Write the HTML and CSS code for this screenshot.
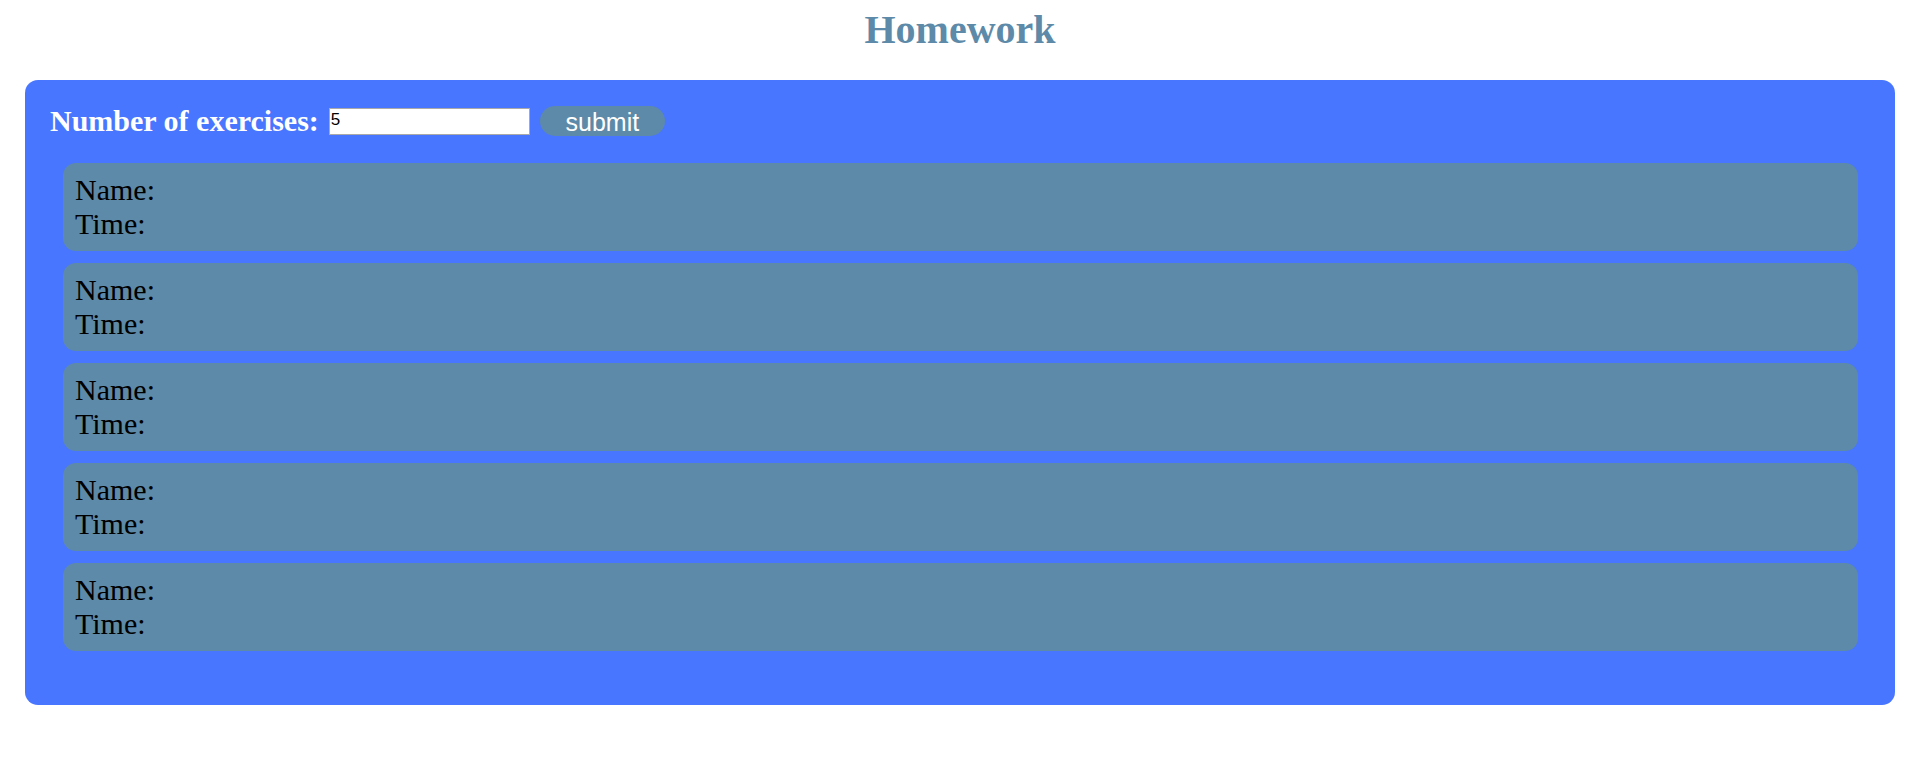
FILE: index.html
```html
<!DOCTYPE html>
<html lang="en">
<head>
<meta charset="utf-8">
<title>Homework</title>
<link rel="stylesheet" href="styles.css">
</head>
<body>
<h1 class="title">Homework</h1>
<main class="panel">
<form class="controls">
<label class="label" for="count">Number of exercises:</label>
<input class="count" id="count" type="text" value="5">
<button class="submit" type="button">submit</button>
</form>
<section class="list">
<div class="exercise"><div>Name:</div><div>Time:</div></div>
<div class="exercise"><div>Name:</div><div>Time:</div></div>
<div class="exercise"><div>Name:</div><div>Time:</div></div>
<div class="exercise"><div>Name:</div><div>Time:</div></div>
<div class="exercise"><div>Name:</div><div>Time:</div></div>
</section>
</main>
</body>
</html>
```
FILE: styles.css
```css
* {
  box-sizing: border-box;
}
body {
  margin: 0;
  font-family: "Liberation Serif", "Times New Roman", serif;
  font-size: 30px;
  line-height: 34px;
}
.title {
  margin: 0;
  padding-top: 7px;
  font-size: 40px;
  line-height: 46px;
  text-align: center;
  color: #5d8aa8;
}
.panel {
  margin: 27px 25px 0;
  padding: 24px 25px 42px;
  border-radius: 13px;
  background: #4876ff;
}
.controls {
  display: flex;
  align-items: center;
  gap: 10px;
}
.label {
  font-weight: bold;
  color: #fff;
}
.count {
  width: 201px;
  height: 27px;
  padding: 0 1px 2px;
  border: 1px solid #a9a9a9;
  font: 17px "Liberation Sans", Arial, sans-serif;
}
.submit {
  width: 125px;
  height: 30px;
  padding: 2px 0 0;
  border: 0;
  border-radius: 15px;
  background: #5d8aa8;
  color: #fff;
  font: 25px "Liberation Sans", Arial, sans-serif;
}
.list {
  display: grid;
  gap: 12px;
  padding: 25px 12px 12px 13px;
}
.exercise {
  padding: 10px 12px;
  border-radius: 13px;
  background: #5d8aa8;
}
```
